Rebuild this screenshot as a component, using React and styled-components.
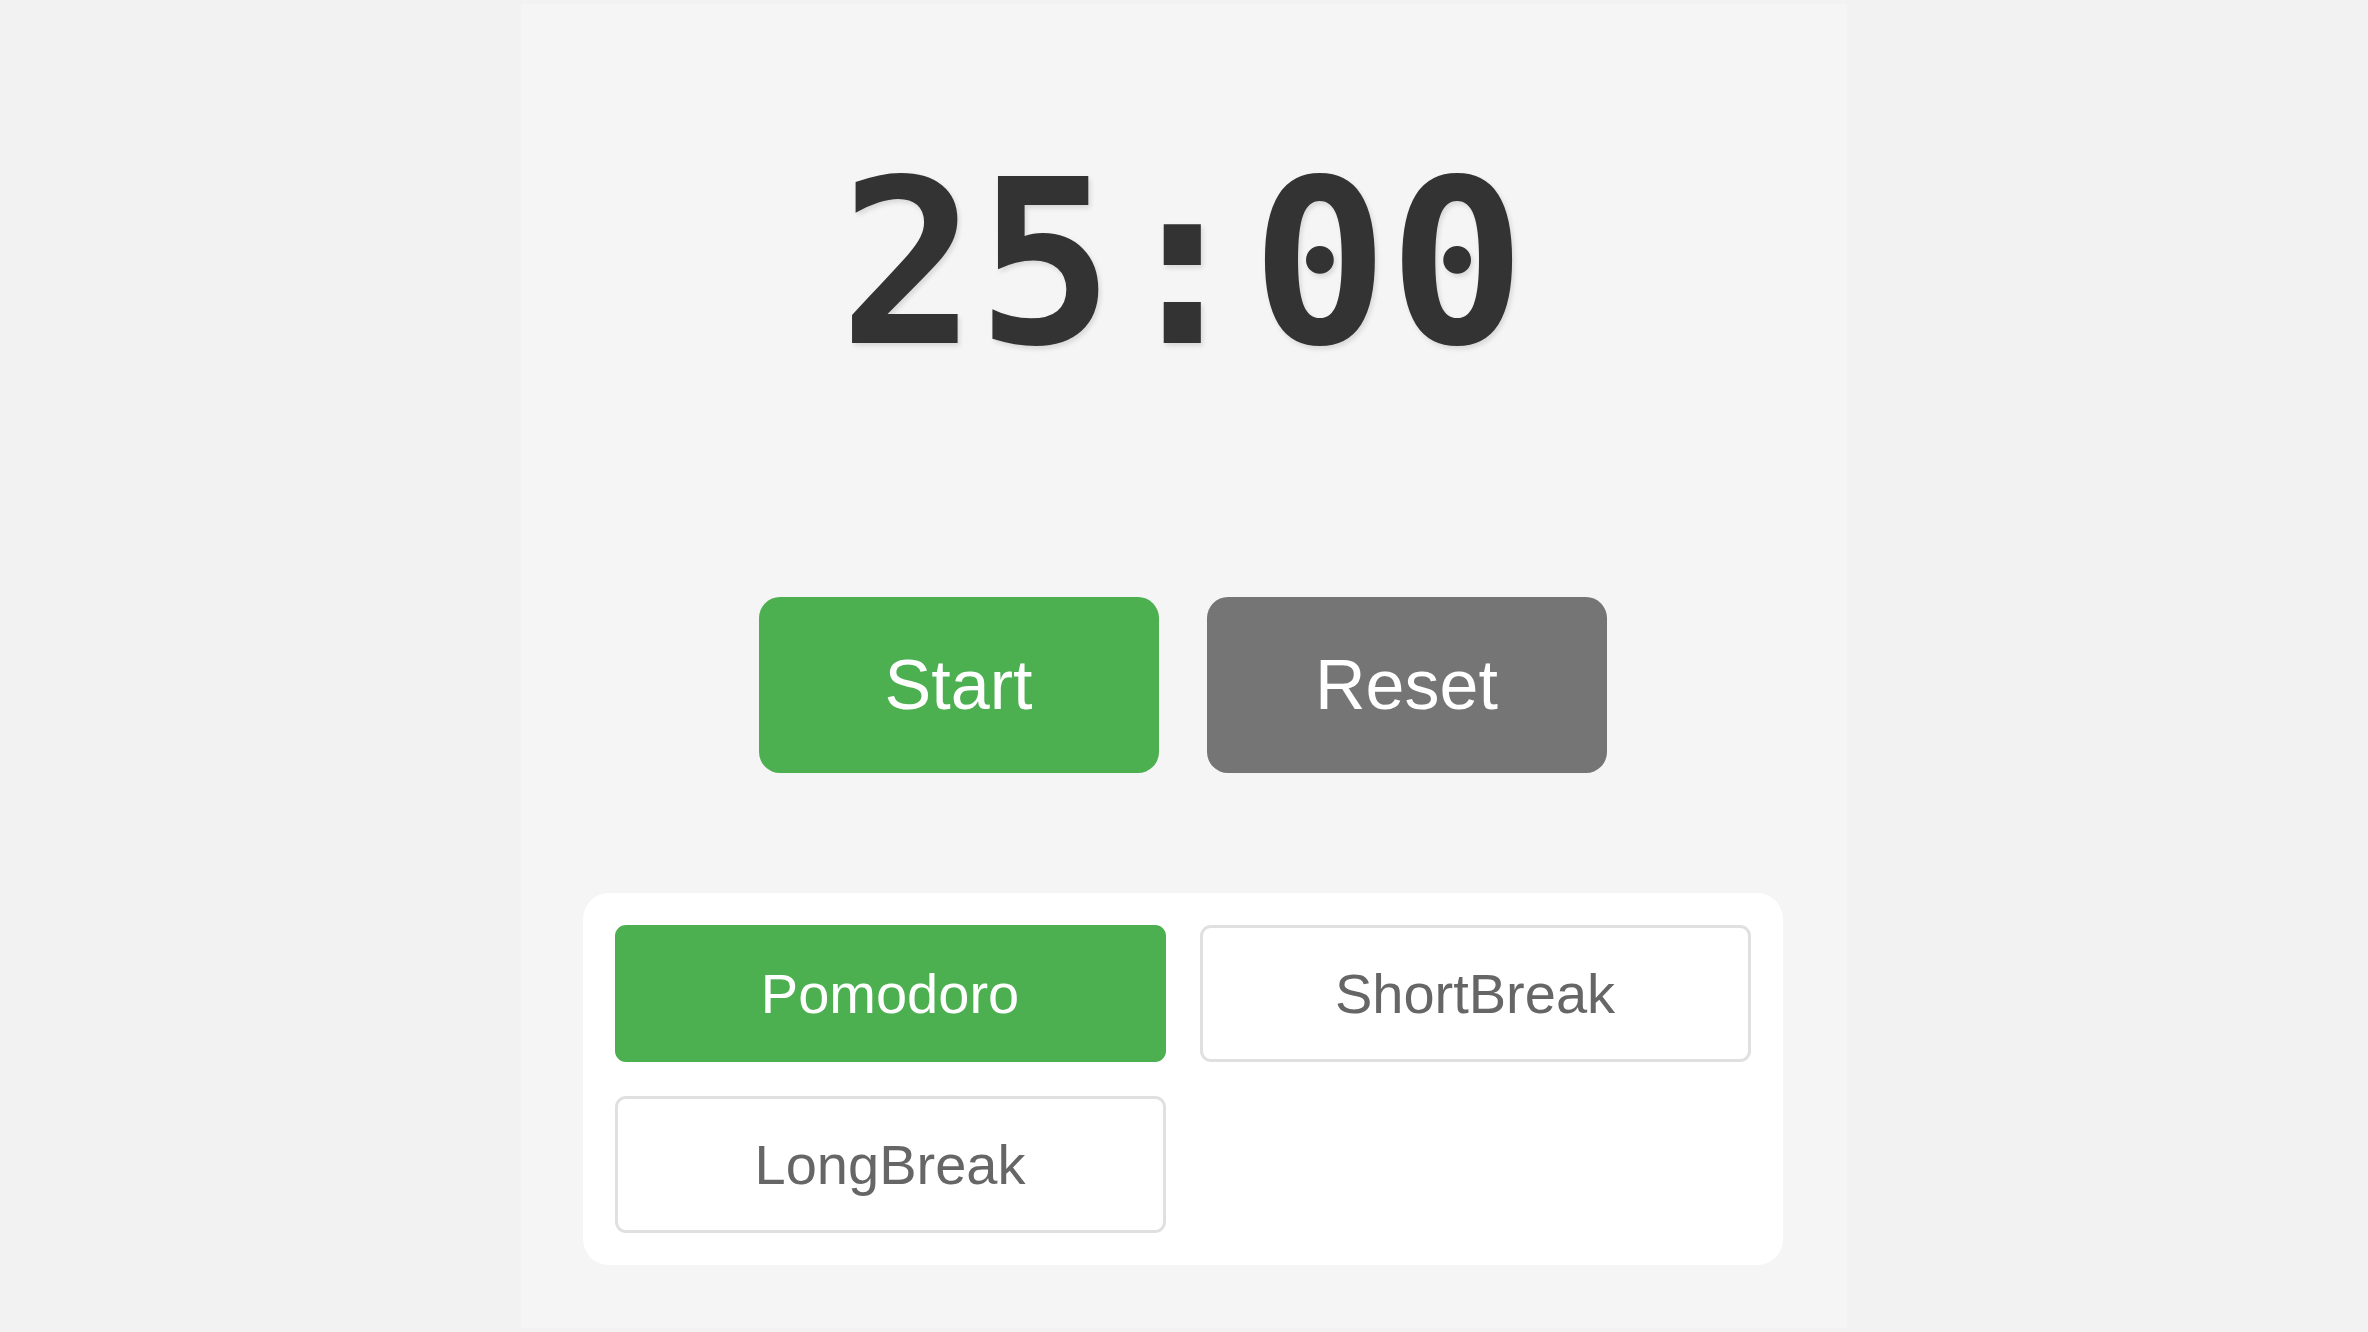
import { useState } from 'react';
import styled, { createGlobalStyle } from 'styled-components';

const MODES = [
  { key: 'pomodoro', label: 'Pomodoro', minutes: 25 },
  { key: 'short', label: 'ShortBreak', minutes: 5 },
  { key: 'long', label: 'LongBreak', minutes: 15 },
];

function formatar(segundos) {
  const m = Math.floor(segundos / 60).toString().padStart(2, '0');
  const s = (segundos % 60).toString().padStart(2, '0');
  return `${m}:${s}`;
}

export default function App() {
  const [modo, setModo] = useState('pomodoro');
  const atual = MODES.find((m) => m.key === modo);

  return (
    <>
      <GlobalStyle />
      <Page>
        <Panel>
          <Timer>{formatar(atual.minutes * 60)}</Timer>
          <Controls>
            <ActionButton $variant="start" type="button">Start</ActionButton>
            <ActionButton $variant="reset" type="button">Reset</ActionButton>
          </Controls>
          <ModeCard>
            {MODES.map((m) => (
              <ModeButton
                key={m.key}
                type="button"
                $active={m.key === modo}
                onClick={() => setModo(m.key)}
              >
                {m.label}
              </ModeButton>
            ))}
          </ModeCard>
        </Panel>
      </Page>
    </>
  );
}

const GlobalStyle = createGlobalStyle`
  html, body { margin: 0; padding: 0; background: #f2f2f2; }
  body { font-family: "Liberation Sans", Arial, sans-serif; overflow: hidden; }
  * { box-sizing: border-box; }
`;

const Page = styled.div`
  height: 100vh; padding: 4px 0;
  display: flex; justify-content: center;
`;

const Panel = styled.div`
  width: 1326px; height: 1324px; padding-right: 3px; background: #f5f5f5;
  display: flex; flex-direction: column; align-items: center;
`;

const Timer = styled.div`
  margin-top: 127px;
  font-family: "DejaVu Sans Mono", "Liberation Mono", monospace;
  font-weight: 700; font-size: 228px; color: #333;
  text-shadow: 2px 3px 5px rgba(0, 0, 0, 0.12);
`;

const Controls = styled.div`
  margin-top: 200px;
  display: flex; gap: 48px;
`;

const ActionButton = styled.button`
  width: 400px; height: 176px; border: none; border-radius: 21px;
  background: ${(p) => (p.$variant === 'start' ? '#4caf50' : '#757575')};
  color: #fff; font-family: "Liberation Sans", Arial, sans-serif; font-size: 70px;
  cursor: pointer;
`;

const ModeCard = styled.div`
  margin-top: 120px; width: 1200px; padding: 32px;
  background: #fff; border-radius: 26px;
  display: grid; grid-template-columns: 1fr 1fr; gap: 34px;
`;

const ModeButton = styled.button`
  height: 137px; border-radius: 11px;
  border: 3px solid ${(p) => (p.$active ? '#4caf50' : '#e0e0e0')};
  background: ${(p) => (p.$active ? '#4caf50' : '#fff')};
  color: ${(p) => (p.$active ? '#fff' : '#666')};
  font-family: "Liberation Sans", Arial, sans-serif; font-size: 56px;
  cursor: pointer;
`;
